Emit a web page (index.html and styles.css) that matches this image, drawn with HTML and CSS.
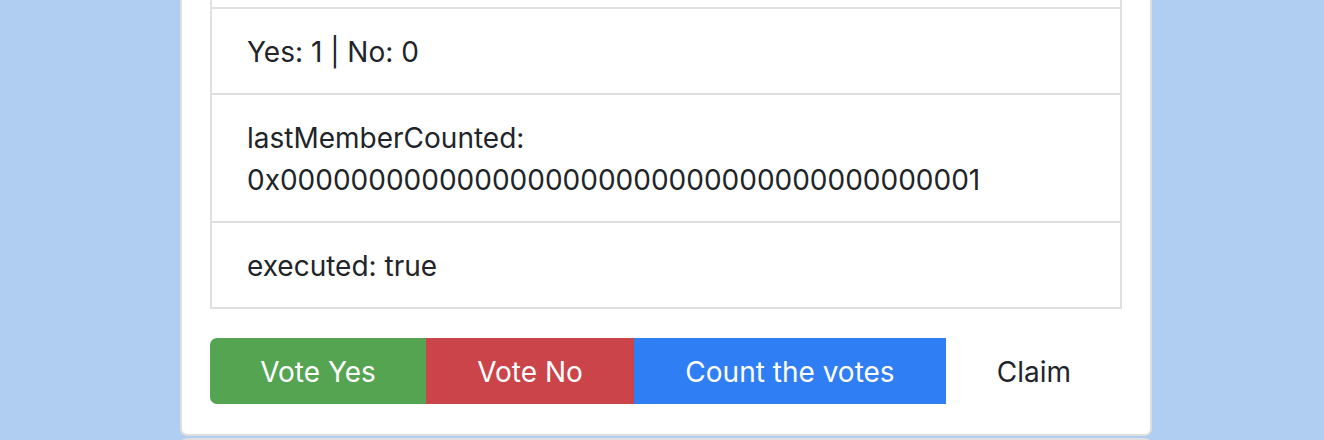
FILE: index.html
```html
<!DOCTYPE html>
<html lang="en">
<head>
<meta charset="utf-8">
<title>Proposal</title>
<link rel="stylesheet" href="styles.css">
</head>
<body>
<div class="page">
  <div class="card card-top">
    <ul class="list-group">
      <li class="list-group-item item-hidden"></li>
      <li class="list-group-item">Yes: 1 | No: 0</li>
      <li class="list-group-item">lastMemberCounted: 0x0000000000000000000000000000000000000001</li>
      <li class="list-group-item">executed: true</li>
    </ul>
    <div class="btn-group">
      <button class="btn btn-success">Vote Yes</button>
      <button class="btn btn-danger">Vote No</button>
      <button class="btn btn-primary">Count the votes</button>
      <button class="btn btn-light">Claim</button>
    </div>
  </div>
  <div class="card card-next"></div>
</div>
</body>
</html>
```
FILE: styles.css
```css
html, body {
  margin: 0;
  padding: 0;
}
body {
  background: #b0cef1;
  font-family: Inter, "Liberation Sans", sans-serif;
  font-size: 28px;
  line-height: 1.5;
  color: #212529;
  overflow: hidden;
}
.page {
  width: 972px;
  margin: 0 auto;
  padding-left: 8px;
}
.card {
  background: #fff;
  border: 2px solid #dedede;
  border-radius: 7px;
  padding: 28px 28px 30px;
}
.card-top {
  margin-top: -109px;
}
.card-next {
  margin-top: 2px;
  height: 200px;
}
.list-group {
  list-style: none;
  margin: 0;
  padding: 0;
}
.list-group-item {
  border: 2px solid #dfdfdf;
  border-top-width: 0;
  padding: 22px 35px 20px;
}
.list-group-item:first-child {
  border-top-width: 2px;
}
.item-hidden {
  min-height: 42px;
}
.btn-group {
  margin-top: 29px;
  display: grid;
  grid-template-columns: 216px 208px 312px 176px;
}
.btn {
  font-family: inherit;
  font-size: 28px;
  line-height: 1.5;
  padding: 11px 21px 9px;
  border: 2px solid transparent;
  color: #fff;
  cursor: pointer;
  white-space: nowrap;
}
.btn:first-child {
  border-radius: 7px 0 0 7px;
}
.btn:last-child {
  border-radius: 0 7px 7px 0;
}
.btn-success { background: #54a452; border-color: #54a452; }
.btn-danger { background: #ca444a; border-color: #ca444a; }
.btn-primary { background: #2f7ef4; border-color: #2f7ef4; }
.btn-light { background: #fff; border-color: #fff; color: #212529; }
```
